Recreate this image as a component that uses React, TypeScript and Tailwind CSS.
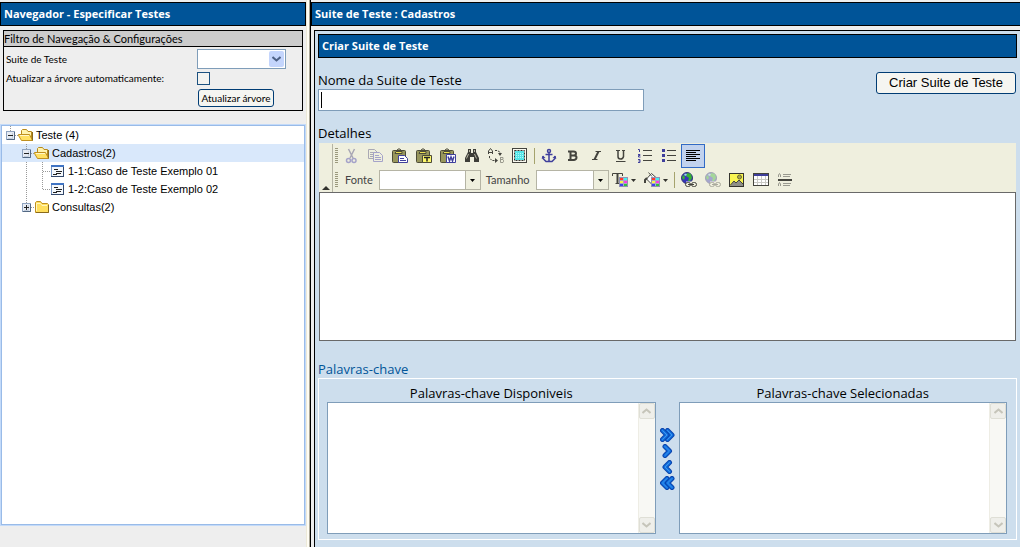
import type { ReactNode } from "react";

const nodes = [
  { label: "Teste (4)", depth: 0, kind: "open", toggle: "minus" },
  { label: "Cadastros(2)", depth: 1, kind: "open", toggle: "minus", selected: true },
  { label: "1-1:Caso de Teste Exemplo 01", depth: 2, kind: "case", toggle: "elbow" },
  { label: "1-2:Caso de Teste Exemplo 02", depth: 2, kind: "case", toggle: "end" },
  { label: "Consultas(2)", depth: 1, kind: "closed", toggle: "plus" },
];

function Icon({ w = 16, children }: { w?: number; children: ReactNode }) {
  return (
    <svg width={w} height="16" viewBox={`0 0 ${w} 16`} fill="none" className="shrink-0">
      {children}
    </svg>
  );
}

/* Tree drawings */
function Guide() {
  return (
    <svg width="16" height="18" className="shrink-0">
      <path d="M8.5 0V18" stroke="#999" strokeDasharray="1 1" />
    </svg>
  );
}

function Toggle({ type }: { type: string }) {
  if (type === "elbow" || type === "end") {
    return (
      <svg width="16" height="18" className="shrink-0" stroke="#999" strokeDasharray="1 1">
        <path d={type === "end" ? "M8.5 0V9" : "M8.5 0V18"} />
        <path d="M9 9.5H16" />
      </svg>
    );
  }
  return (
    <svg width="16" height="18" className="shrink-0" fill="none">
      <path d="M8.5 0V5M13 9.5H16" stroke="#999" strokeDasharray="1 1" />
      <rect x="4.5" y="5.5" width="8" height="8" fill="#e6ebf3" stroke="#8fa3bf" />
      <path d="M5 13.5H12.5V6" stroke="#536883" />
      <path d="M10.5 7V12.5H6" stroke="#c3cedd" />
      <path d={type === "plus" ? "M6 9.5H11M8.5 7V12" : "M6 9.5H11"} stroke="#222" />
    </svg>
  );
}

function NodeIcon({ kind }: { kind: string }) {
  if (kind === "case") {
    return (
      <Icon>
        <rect x="1.5" y="2.5" width="12" height="11" fill="#f4f8fd" stroke="#7696c4" />
        <path d="M1 3H14" stroke="#3f74c4" strokeWidth="2" />
        <path d="M13.5 4V14M1 13.5H14" stroke="#33486b" />
        <path d="M4 6.5H8M6 8.5H12M3 11.5H7M6 10.5H11" stroke="#222" />
      </Icon>
    );
  }
  return (
    <Icon>
      {kind === "open" ? (
        <>
          <path d="M3.5 12V3.5L4.5 2.500H8.500L10 4.500H13.500V13" fill="#fff3ae" stroke="#b88a1c" />
          <path d="M3.500 13.500L0.500 8.500V7.500H11.500L14.500 13.500Z" fill="#ffe063" stroke="#c0901f" />
          <path d="M2 8.500H11" stroke="#fff6c8" />
          <path d="M14.500 5V13.500" stroke="#8a6a1c" />
        </>
      ) : (
        <>
          <path d="M1.500 13.500V3.500L2.500 2.500H6.500L8 4.500H13.500L14.500 5.500V13.500Z" fill="#ffdf5e" stroke="#c0901f" />
          <path d="M2.500 12V4.500H6.500L8 6.500H13" stroke="#fff6c0" />
          <path d="M2 13.500H14.500V6" stroke="#8a6a1c" />
        </>
      )}
    </Icon>
  );
}

/* Editor toolbar drawings */
function Clipboard({ children }: { children: ReactNode }) {
  return (
    <Icon>
      <rect x="0.5" y="2.5" width="13" height="12" rx="1" fill="#98965c" stroke="#4c4b38" />
      <path d="M4 3.5H10V5.5H3Z" fill="#ece052" stroke="#4c4b38" />
      <path d="M5 2.5L6 1H8L9 2.5" stroke="#4c4b38" />
      {children}
    </Icon>
  );
}

const cutIcon = (
  <Icon>
    <path d="M4.5 1L9 10M10.5 1L6 10" stroke="#a9a7b5" strokeWidth="1.5" />
    <circle cx="4.5" cy="12.5" r="2" stroke="#a5a3c9" strokeWidth="1.5" />
    <circle cx="10" cy="12.5" r="2" stroke="#a5a3c9" strokeWidth="1.5" />
  </Icon>
);

const copyIcon = (
  <Icon>
    <path d="M0.5 1.5H6.5L9.5 4.5V10.5H0.5Z" fill="#efefde" stroke="#aaa9b4" />
    <path d="M2 4.5H6M2 6.5H7M2 8.5H7" stroke="#aaa9b4" />
    <path d="M5.5 4.5H11.5L14.5 7.5V13.5H5.5Z" fill="#efefde" stroke="#a5a3c9" />
    <path d="M7 7.5H11M7 9.5H13M7 11.5H13" stroke="#a5a3c9" />
  </Icon>
);

const pasteIcon = (
  <Clipboard>
    <path d="M6.5 7.5H12.5L15.5 10.5V14.5H6.5Z" fill="#fff" stroke="#3f3f9c" />
    <path d="M8 10.5H12M8 12.5H14" stroke="#3f3f9c" />
  </Clipboard>
);

const pasteTextIcon = (
  <Clipboard>
    <path d="M6.5 7.5H15.5V14.5H6.5Z" fill="#fbf66a" stroke="#4c4b38" />
    <path d="M8 9.5H14M11 9V13.5" stroke="#222" strokeWidth="1.5" />
  </Clipboard>
);

const pasteWordIcon = (
  <Clipboard>
    <path d="M6.5 6.5H15.5V14.5H6.5Z" fill="#fff" stroke="#3f3f9c" />
    <path d="M8 8.5L9.5 13L11 9L12.5 13L14 8.5" stroke="#3f3f9c" strokeWidth="1.5" />
  </Clipboard>
);

const findIcon = (
  <Icon>
    <path d="M4 1H7V5H9V1H12V4L15 10V14H10V9H6V14H1V10L4 4Z" fill="#3d3d38" />
    <path d="M4.5 6L2.5 10.5M10.5 6L12.5 10.5M5.5 2V4M10.5 2V4" stroke="#b7b6a4" />
  </Icon>
);

const replaceIcon = (
  <Icon>
    <path d="M0.5 6V3L2.5 0.5L4.5 3V6M1 4.5H4" stroke="#44443e" />
    <path d="M12.5 9V14.5H15L16 13L15 11.5H13M13 9.5H15V11" stroke="#99998c" />
    <path d="M7 2.5H9L12 4V7M1.5 8V10L4 12.5H8" stroke="#44443e" strokeDasharray="2 1" />
    <path d="M10 5H14L12 8ZM7 10L10 12.5L7 15Z" fill="#44443e" />
  </Icon>
);

const selectAllIcon = (
  <Icon>
    <rect x="0.5" y="0.5" width="14" height="14" fill="#fafaf0" stroke="#44443e" />
    <rect x="3" y="3" width="9" height="9" fill="#55e4e6" />
    <rect x="2.5" y="2.5" width="10" height="10" stroke="#33332e" strokeDasharray="2 1" />
    <path d="M4 5.5H11M4 7.5H11M4 9.5H11" stroke="#aefafa" strokeDasharray="1 1" />
  </Icon>
);

const anchorIcon = (
  <Icon>
    <circle cx="8" cy="3" r="1.5" stroke="#3f3f9c" strokeWidth="1.5" />
    <path d="M8 5V14M4.5 6.5H11.5" stroke="#3f3f9c" strokeWidth="1.5" />
    <path d="M2 8V10.5L5 13.5H11L14 10.5V8" stroke="#3f3f9c" strokeWidth="1.5" />
    <path d="M0.5 10.5L2 7.5L4.5 10ZM15.5 10.5L14 7.5L11.5 10Z" fill="#3f3f9c" />
  </Icon>
);

const boldIcon = (
  <Icon>
    <path
      d="M3 3.5H8.5Q11 3.5 11 5.5T8.5 7.5H5.5H9Q11.5 7.5 11.5 9.5T9 12H3M5.5 3V12.5"
      stroke="#44443e"
      strokeWidth="2"
    />
  </Icon>
);

const italicIcon = (
  <Icon>
    <path d="M6.5 3.5H12M3 11.5H8.5" stroke="#44443e" />
    <path d="M9.5 3.5L5.5 11.5" stroke="#44443e" strokeWidth="2" />
  </Icon>
);

const underlineIcon = (
  <Icon>
    <path d="M3 2.5H7M9 2.5H12M3 13.5H12.5" stroke="#44443e" />
    <path d="M5 3V8.5Q5 11 7.5 11T10.5 8.5V3" stroke="#44443e" strokeWidth="1.5" />
  </Icon>
);

const orderedIcon = (
  <Icon>
    <path d="M6 2.5H15M6 7.5H15M6 12.5H15" stroke="#44443e" />
    <path d="M1 1.5H2.5V4M1 6.5H3V7.5H1.5V9H3.5M1 11.5H3V14.5H1M1.5 13H3" stroke="#3f3f9c" />
  </Icon>
);

const bulletIcon = (
  <Icon>
    <path d="M1 1H4V4H1ZM1 6H4V9H1ZM1 11H4V14H1Z" fill="#3f3f9c" />
    <path d="M6 2.5H15M6 7.5H15M6 12.5H15" stroke="#44443e" />
  </Icon>
);

const alignIcon = (
  <Icon>
    <path d="M1 2.5H15M1 4.5H11M1 6.5H15M1 8.5H11M1 10.5H15M1 12.5H11" stroke="#000" />
  </Icon>
);

function Swatches() {
  return (
    <>
      <rect x="7.5" y="5.5" width="8" height="9" fill="#a9a9c4" stroke="#9191b5" />
      <path d="M8 6H11V8H8Z" fill="#ff3b30" />
      <path d="M12 6H15V8H12Z" fill="#42f0f0" />
      <path d="M8 9H11V11H8Z" fill="#f7f34b" />
      <path d="M12 9H15V11H12Z" fill="#ff38e4" />
      <path d="M8 12H11V14H8Z" fill="#4040ee" />
      <path d="M12 12H15V14H12Z" fill="#31c23a" />
    </>
  );
}

const dropArrow = <path d="M19 7H24L21.5 10Z" fill="#33332e" />;

const textColorIcon = (
  <Icon w={24}>
    <path d="M0.5 4V1.5H10.5V4M3.5 11.5H7.5" stroke="#44443e" />
    <path d="M5.5 1V12" stroke="#44443e" strokeWidth="2" />
    <Swatches />
    {dropArrow}
  </Icon>
);

const fillColorIcon = (
  <Icon w={24}>
    <path d="M2.5 7L7.5 1.5L12.5 6L7 11.5Z" fill="#fff" stroke="#44443e" />
    <path d="M7 6L11 6L7 10Z" fill="#aaa" />
    <path d="M4.5 0.5L8 4.5" stroke="#55554d" />
    <path d="M3 6L1 8V11" stroke="#44443e" strokeWidth="2" />
    <Swatches />
    {dropArrow}
  </Icon>
);

function Link({ faded = false }: { faded?: boolean }) {
  return (
    <Icon>
      <g opacity={faded ? 0.4 : 1}>
        <circle cx="6" cy="6" r="5.5" fill="#3535b8" stroke="#35357a" />
        <path d="M6 1L10 2L11 6L9 9H7L8 6L5 4ZM2 3L4 5L3 8L1 6Z" fill="#37b134" />
        <path d="M3 2.5L5 1.5L6 3L4 4Z" fill="#9adbe8" />
        <path d="M5 9.5H15.5V15.5H5Z" fill="#efefde" />
        <rect x="4.5" y="10.5" width="5" height="4" rx="2" stroke="#44443e" />
        <rect x="10.5" y="10.5" width="5" height="4" rx="2" stroke="#44443e" />
        <path d="M7 12.5H13" stroke="#44443e" />
      </g>
    </Icon>
  );
}

const imageIcon = (
  <Icon>
    <rect x="0.5" y="1.5" width="14" height="13" fill="#f9f551" stroke="#33332e" />
    <path d="M1 14L5 9L7 11L10 8L14 12V14Z" fill="#8f8f88" />
    <path d="M1 13.5L5 9L7 11L10 8L14 12" stroke="#44443e" />
    <circle cx="10.5" cy="5" r="2" fill="#a8a64e" stroke="#6b6a33" />
  </Icon>
);

const tableIcon = (
  <Icon>
    <rect x="0.5" y="1.5" width="15" height="12" fill="#fff" stroke="#44443e" />
    <path d="M1 3H15" stroke="#3f3f9c" strokeWidth="2" />
    <path d="M1 7.5H15M1 10.5H15M4.5 4V13M8.5 4V13M12.5 4V13" stroke="#c9c9c4" />
  </Icon>
);

const ruleIcon = (
  <Icon>
    <path d="M1 8H15" stroke="#44443e" strokeWidth="2" />
    <path
      d="M1.5 5V3L2.5 1.5L3.5 3V5M6 2.5H14M6 4.5H13M1.5 14V12L2.5 10.5L3.5 12V14M6 11.5H14M6 13.5H13"
      stroke="#99998f"
    />
  </Icon>
);

const clipboardTools = [
  { name: "Recortar", icon: cutIcon },
  { name: "Copiar", icon: copyIcon },
  { name: "Colar", icon: pasteIcon },
  { name: "Colar como texto", icon: pasteTextIcon },
  { name: "Colar do Word", icon: pasteWordIcon },
  { name: "Localizar", icon: findIcon },
  { name: "Substituir", icon: replaceIcon },
  { name: "Selecionar tudo", icon: selectAllIcon },
];

const formatTools = [
  { name: "Âncora", icon: anchorIcon },
  { name: "Negrito", icon: boldIcon },
  { name: "Itálico", icon: italicIcon },
  { name: "Sublinhado", icon: underlineIcon },
  { name: "Numeração", icon: orderedIcon },
  { name: "Marcadores", icon: bulletIcon },
];

const insertTools = [
  { name: "Inserir link", icon: <Link /> },
  { name: "Remover link", icon: <Link faded /> },
  { name: "Imagem", icon: imageIcon },
  { name: "Tabela", icon: tableIcon },
  { name: "Linha horizontal", icon: ruleIcon },
];

function Tools({ items }: { items: { name: string; icon: ReactNode }[] }) {
  return (
    <>
      {items.map((t) => (
        <button type="button" key={t.name} aria-label={t.name} className="flex h-6 w-6 items-center justify-center">
          {t.icon}
        </button>
      ))}
    </>
  );
}

function Grip() {
  return (
    <svg width="3" height="16" className="mr-[2px] shrink-0">
      <path d="M1.5 0V16" stroke="#9b997d" strokeWidth="3" strokeDasharray="1 1" />
    </svg>
  );
}

function Divider() {
  return <span className="mx-[2px] h-4 w-px bg-[#a5a36d]" />;
}

function Combo({ id, label, width }: { id: string; label: string; width: string }) {
  return (
    <>
      <label htmlFor={id} className="ml-[5px] font-[Lato] text-[11px] text-[#444]">
        {label}
      </label>
      <div className={`ml-[6px] flex h-5 border border-[#b5b4a4] bg-white ${width}`}>
        <select id={id} className="min-w-0 flex-1 appearance-none outline-none" />
        <span className="flex w-[15px] items-center justify-center border-l border-[#b5b4a4] bg-[#efefde]">
          <svg width="5" height="3">
            <path d="M0 0H5L2.5 3Z" fill="#000" />
          </svg>
        </span>
      </div>
    </>
  );
}

/* Keyword lists */
function ScrollButton({ label, d }: { label: string; d: string }) {
  return (
    <button
      type="button"
      aria-label={label}
      className="flex h-4 w-4 items-center justify-center rounded-xs border border-[#dfdfd6] bg-[#efefea]"
    >
      <svg width="9" height="6" fill="none">
        <path d={d} stroke="#c6c5ba" strokeWidth="2" />
      </svg>
    </button>
  );
}

function KeywordList({ id, label }: { id: string; label: string }) {
  return (
    <div className="flex flex-1 flex-col">
      <label htmlFor={id} className="h-[19px] text-center text-[13px] leading-[21px] font-medium">
        {label}
      </label>
      <div className="flex h-[132px] border border-[#7f9db9] bg-white">
        <select id={id} multiple className="min-w-0 flex-1 appearance-none outline-none" />
        <div className="flex w-[17px] flex-col items-center justify-between border-l border-[#eeede5] bg-[#f8f8f4]">
          <ScrollButton label="Rolar para cima" d="M0.5 5L4.5 1.5L8.5 5" />
          <ScrollButton label="Rolar para baixo" d="M0.5 1L4.5 4.5L8.5 1" />
        </div>
      </div>
    </div>
  );
}

const moves = [
  { name: "Adicionar todas", paths: ["M7.5 2.5L12 7L7.5 11.5", "M2.5 2.5L7 7L2.5 11.5"] },
  { name: "Adicionar", paths: ["M5 2.5L9.5 7L5 11.5"] },
  { name: "Remover", paths: ["M9.5 2.5L5 7L9.5 11.5"] },
  { name: "Remover todas", paths: ["M7 2.5L2.5 7L7 11.5", "M12 2.5L7.5 7L12 11.5"] },
];

function MoveButton({ name, paths }: { name: string; paths: string[] }) {
  return (
    <button type="button" aria-label={name} className="flex h-4 items-center">
      <svg width="15" height="14" fill="none" strokeLinecap="round" strokeLinejoin="round">
        {paths.map((d) => (
          <g key={d}>
            <path d={d} stroke="#0b44ae" strokeWidth="5" />
            <path d={d} stroke="#0f72e0" strokeWidth="3" />
            <path d={d} stroke="#3f93ee" />
          </g>
        ))}
      </svg>
    </button>
  );
}

function Navigator() {
  return (
    <aside className="w-[30%] shrink-0 bg-[#eee] pt-[2px]">
      <h1 className="h-6 border border-black bg-[#005498] px-[3px] text-[11px] leading-[22px] font-bold text-white">
        Navegador - Especificar Testes
      </h1>

      <section className="mx-[3px] mt-1 border border-black font-[Lato]">
        <h2 className="h-4 border-b border-black bg-[#ccc] text-[11px] leading-[15px]">
          Filtro de Navegação &amp; Configurações
        </h2>
        <div className="grid grid-cols-[191px_1fr] items-center pt-[2px] pb-[3px] pl-[2px] text-[10px]">
          <label htmlFor="suite">Suite de Teste</label>
          <div className="flex h-5 w-[89px] border border-[#7f9db9] bg-white">
            <select id="suite" className="min-w-0 flex-1 appearance-none outline-none" />
            <span className="m-px flex w-[15px] items-center justify-center rounded-xs bg-[#c4d5fc]">
              <svg width="9" height="6" fill="none">
                <path d="M0.5 1L4.5 4.5L8.5 1" stroke="#4d6185" strokeWidth="2" />
              </svg>
            </span>
          </div>
          <label htmlFor="auto">Atualizar a árvore automaticamente:</label>
          <input
            id="auto"
            type="checkbox"
            className="my-[3px] h-[13px] w-[13px] appearance-none border border-[#1c5180] bg-[#f3f3f0]"
          />
          <button className="col-start-2 mt-px ml-px h-[18px] w-[76px] rounded-[3px] border border-[#003c74] bg-[#f5f5f1] leading-4">
            Atualizar árvore
          </button>
        </div>
      </section>

      <div className="mt-[13px] border border-[#c3daf9]">
        <ul className="h-[400px] border border-[#99bbe8] bg-white font-[Liberation_Sans] text-[11px]">
          {nodes.map((n) => (
            <li
              key={n.label}
              className={n.selected ? "flex h-[18px] items-center bg-[#d9e8fb]" : "flex h-[18px] items-center"}
            >
              {n.depth > 0 && <span className="w-4" />}
              {n.depth > 1 && <Guide />}
              <Toggle type={n.toggle} />
              <NodeIcon kind={n.kind} />
              <a href="#" className="ml-[2px]">
                {n.label}
              </a>
            </li>
          ))}
        </ul>
      </div>
    </aside>
  );
}

function Editor() {
  return (
    <div className="mx-px">
      <div className="flex border-b border-[#696969] bg-[#efefde] pt-px">
        <button
          type="button"
          aria-label="Recolher barra"
          className="flex w-[14px] items-end justify-center border-r border-[#b5b4a4] pb-[2px]"
        >
          <svg width="8" height="4">
            <path d="M0 4L4 0L8 4Z" fill="#33332e" />
          </svg>
        </button>
        <div className="pl-[2px]">
          <div className="flex h-6 items-center">
            <Grip />
            <Tools items={clipboardTools} />
            <Divider />
            <Tools items={formatTools} />
            <button
              type="button"
              aria-label="Alinhar à esquerda"
              className="flex h-6 w-6 items-center justify-center border border-[#316ac5] bg-[#c1d2ee]"
            >
              {alignIcon}
            </button>
          </div>
          <div className="flex h-6 items-center">
            <Grip />
            <Combo id="font" label="Fonte" width="w-[102px]" />
            <Combo id="size" label="Tamanho" width="w-[73px]" />
            <button type="button" aria-label="Cor do texto" className="ml-[3px] flex h-6 w-8 items-center">
              {textColorIcon}
            </button>
            <button type="button" aria-label="Cor do fundo" className="flex h-6 w-7 items-center">
              {fillColorIcon}
            </button>
            <Divider />
            <Tools items={insertTools} />
          </div>
        </div>
      </div>
      <textarea
        id="details"
        className="block h-[148px] w-full resize-none border border-t-0 border-[#696969] bg-white p-1 outline-none"
      />
    </div>
  );
}

function SuiteForm() {
  return (
    <main className="flex flex-1 flex-col border-l border-black bg-[#eee] pt-[2px]">
      <h1 className="h-6 border border-r-0 border-black bg-[#005498] px-[3px] text-[11px] leading-[22px] font-bold text-white">
        Suite de Teste : Cadastros
      </h1>

      <form className="mt-1 ml-[3px] flex-1 border-t border-l border-black bg-[#cddeed] p-[3px]">
        <h2 className="h-6 border border-black bg-[#005498] px-[3px] text-[11px] leading-[22px] font-bold text-white">
          Criar Suite de Teste
        </h2>

        <div className="flex items-start justify-between pt-[13px] pr-px">
          <div>
            <label htmlFor="name" className="block h-[18px] text-[13px] leading-[18px] font-medium">
              Nome da Suite de Teste
            </label>
            <div className="flex h-[22px] w-[326px] items-center border border-[#7f9db9] bg-white pl-[2px]">
              <span className="h-4 w-px bg-black" />
              <input id="name" type="text" className="min-w-0 flex-1 outline-none" />
            </div>
          </div>
          <button className="mt-px h-[22px] w-[140px] rounded-[3px] border border-[#003c74] bg-[#f5f5f1] font-[Liberation_Sans] text-[13px] leading-5">
            Criar Suite de Teste
          </button>
        </div>

        <label htmlFor="details" className="mt-[13px] block h-[19px] text-[13px] leading-[19px] font-medium">
          Detalhes
        </label>
        <Editor />

        <h3 className="mt-[19px] h-[18px] text-[13px] leading-[18px] font-medium text-[#005498]">
          Palavras-chave
        </h3>
        <div className="flex border border-white pt-1 pr-[9px] pb-[5px] pl-2">
          <KeywordList id="available" label="Palavras-chave Disponiveis" />
          <div className="flex w-[23px] flex-col items-center pt-11">
            {moves.map((m) => (
              <MoveButton key={m.name} {...m} />
            ))}
          </div>
          <KeywordList id="selected" label="Palavras-chave Selecionadas" />
        </div>
      </form>
    </main>
  );
}

export default function App() {
  return (
    <div className="flex min-h-screen font-['Trebuchet_MS','Open_Sans',sans-serif] text-black">
      <Navigator />
      <div className="w-1 shrink-0 border-r border-l border-r-[#aca899] border-l-[#ece9d8] bg-[#fffdf4]" />
      <SuiteForm />
    </div>
  );
}
